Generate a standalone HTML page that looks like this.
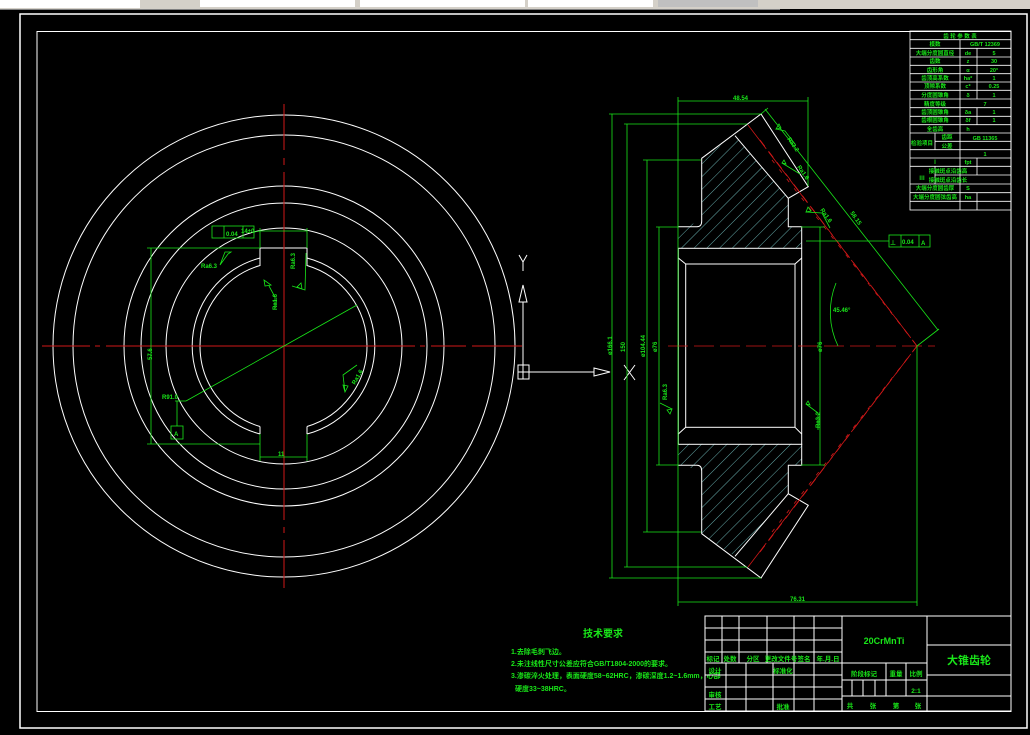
<!DOCTYPE html>
<html><head><meta charset="utf-8"><style>
html,body{margin:0;padding:0;background:#000;width:1030px;height:735px;overflow:hidden}
svg{display:block}
text{font-family:"Liberation Sans","Noto Sans CJK SC",sans-serif;fill:#19e619;font-weight:bold}
</style></head><body>
<svg width="1030" height="735" viewBox="0 0 1030 735" xmlns="http://www.w3.org/2000/svg">
<defs>
<pattern id="h" width="9" height="9" patternUnits="userSpaceOnUse" patternTransform="rotate(45)">
<line x1="0" y1="0" x2="0" y2="9" stroke="#7fd6d6" stroke-width="0.8"/></pattern>
</defs>
<rect width="1030" height="735" fill="#000"/>
<rect x="0" y="0" width="1030" height="9" fill="#d4d0c8"/>
<rect x="0" y="0" width="140" height="8" fill="#fff"/>
<rect x="200" y="0" width="155" height="7" fill="#fff"/>
<rect x="360" y="0" width="165" height="7" fill="#fff"/>
<rect x="528" y="0" width="125" height="7" fill="#fff"/>
<rect x="658" y="0" width="100" height="7" fill="#c0c0c0"/>
<line x1="0" y1="9.5" x2="780" y2="9.5" stroke="#808080"/>
<rect x="20" y="14" width="1007" height="714" fill="none" stroke="#fff" stroke-width="1.5"/>
<rect x="37" y="31.5" width="974" height="680" fill="none" stroke="#fff" stroke-width="1"/>

<g fill="none" stroke="#fff" stroke-width="1">
<circle cx="284" cy="346" r="231"/>
<circle cx="284" cy="346" r="211"/>
<circle cx="284" cy="346" r="160"/>
<circle cx="284" cy="346" r="143"/>
<circle cx="284" cy="346" r="118"/>
<path d="M260,258 A91,91 0 0 0 260,434"/>
<path d="M307,258 A91,91 0 0 1 307,434"/>
<path d="M260,265.5 A84,84 0 0 0 260,426.5"/>
<path d="M307,265.5 A84,84 0 0 1 307,426.5"/>
<path d="M260,266 L260,248 L307,248 L307,266"/>
<path d="M260,426.5 L260,434 M307,426.5 L307,434"/>
</g>
<g stroke="#d01818" stroke-width="1" fill="none">
<line x1="42" y1="346" x2="90" y2="346"/><line x1="95" y1="346" x2="100" y2="346"/><line x1="106" y1="346" x2="415" y2="346"/>
<line x1="420" y1="346" x2="425" y2="346"/><line x1="431" y1="346" x2="466" y2="346"/><line x1="472" y1="346" x2="522" y2="346"/>
<line x1="284" y1="104" x2="284" y2="150"/><line x1="284" y1="158" x2="284" y2="165"/><line x1="284" y1="172" x2="284" y2="520"/>
<line x1="284" y1="527" x2="284" y2="533"/><line x1="284" y1="540" x2="284" y2="588"/>
</g>
<g stroke="#19e619" stroke-width="0.8" fill="none">
<line x1="284" y1="346" x2="357" y2="305"/>
<line x1="284" y1="346" x2="186" y2="401"/>
<line x1="186" y1="401" x2="175" y2="401"/>
<line x1="147" y1="248" x2="260" y2="248"/>
<line x1="147" y1="444" x2="260" y2="444"/>
<line x1="151" y1="248" x2="151" y2="444"/>
<line x1="260" y1="228" x2="260" y2="248"/>
<line x1="307" y1="228" x2="307" y2="248"/>
<line x1="260" y1="231" x2="307" y2="231"/>
<line x1="260" y1="434" x2="260" y2="461"/>
<line x1="307" y1="434" x2="307" y2="461"/>
<line x1="260" y1="457" x2="307" y2="457"/>
<rect x="212" y="226" width="42" height="12"/>
<line x1="224" y1="226" x2="224" y2="238"/><line x1="243" y1="226" x2="243" y2="238"/>
<line x1="254" y1="232" x2="260" y2="231"/>
<rect x="171" y="426" width="12" height="13"/>
<line x1="177" y1="401" x2="177" y2="426"/>
<path d="M220,265 L225,252 L231,252 L228,254 Z"/>
<path d="M264,280 L265,286 L271,285 Z M269,286 L275,297 L275,308"/>
<path d="M301,283 L302,289 L297,287 Z M292,286 L305,290 L306,253"/>
<path d="M345,392 L348,386 L343,385 Z M345,392 L343,375 L357,365"/>
</g>
<g font-size="6">
<text x="241" y="233">14±0</text>
<text x="226" y="236">0.04</text>
<text x="201" y="268">Ra6.3</text>
<text transform="translate(277,310) rotate(-90)">Ra1.6</text>
<text transform="translate(295,269) rotate(-90)">Ra6.3</text>
<text transform="translate(355,385) rotate(-60)">Ra1.6</text>
<text transform="translate(152,360) rotate(-90)">57.6</text>
<text x="162" y="399">R91.0</text>
<text x="278" y="456">11</text>
<text x="174" y="436">A</text>
</g>
<g stroke="#fff" fill="none" stroke-width="1">
<path d="M519,255 L523,262 L527,255 M523,262 L523,271"/>
<path d="M523,285 L519,302 L527,302 Z"/>
<line x1="523" y1="302" x2="523" y2="365"/>
<rect x="518" y="365" width="11" height="14"/>
<line x1="523" y1="365" x2="523" y2="379"/><line x1="518" y1="372" x2="529" y2="372"/>
<line x1="529" y1="372" x2="594" y2="372"/>
<path d="M594,368 L610,372 L594,376 Z"/>
<path d="M624,365 L635,380 M635,365 L624,380"/>
</g>

<path d="M735,135.7 L788.3,198.3 L788.3,226.7 L801.7,226.7 L801.7,248.3 L678.3,248.3 L678.3,226.7 L701.7,221.7 L701.7,158.3 Z" fill="url(#h)"/>
<path d="M735,556.3 L788.3,493.7 L788.3,465.3 L801.7,465.3 L801.7,443.7 L678.3,443.7 L678.3,465.3 L701.7,470.3 L701.7,533.7 Z" fill="url(#h)"/>
<g fill="none" stroke="#fff" stroke-width="1">
<path d="M678.3,226.7 L697,226.7 Q701.7,226.7 701.7,221 L701.7,158.3 L761,114 L808.3,186.7 L788.3,198.3 L788.3,226.7 L801.7,226.7 L801.7,248.3"/>
<path d="M678.3,465.3 L697,465.3 Q701.7,465.3 701.7,471 L701.7,533.7 L761,578 L808.3,505.3 L788.3,493.7 L788.3,465.3 L801.7,465.3 L801.7,443.7"/>
<line x1="735" y1="135.7" x2="788.3" y2="198.3"/>
<line x1="735" y1="556.3" x2="788.3" y2="493.7"/>
<rect x="678.3" y="248.3" width="123.4" height="196"/>
<rect x="685.7" y="264" width="109.3" height="163.3"/>
<path d="M678.3,258 L685.7,264 M801.7,258 L795,264 M678.3,434 L685.7,427.3 M801.7,434 L795,427.3"/>
</g>
<g stroke="#d01818" stroke-width="0.8" fill="none">
<line x1="748" y1="125" x2="917" y2="346" stroke-dasharray="30,4"/>
<line x1="760" y1="140" x2="917" y2="346" stroke-dasharray="8,6"/>
<line x1="772" y1="160" x2="917" y2="346" stroke-dasharray="4,8"/>
<line x1="748" y1="567" x2="917" y2="346" stroke-dasharray="30,4"/>
<line x1="760" y1="552" x2="917" y2="346" stroke-dasharray="8,6"/>
<line x1="772" y1="532" x2="917" y2="346" stroke-dasharray="4,8"/>
<line x1="668" y1="346" x2="935" y2="346" stroke-dasharray="20,6"/>
</g>
<g stroke="#19e619" stroke-width="0.8" fill="none">
<line x1="678" y1="97" x2="678" y2="606"/>
<line x1="808" y1="97" x2="808" y2="186"/>
<line x1="917" y1="346" x2="917" y2="606"/>
<line x1="678" y1="101" x2="808" y2="101"/>
<line x1="678" y1="602" x2="917" y2="602"/>
<line x1="609" y1="114" x2="761" y2="114"/><line x1="609" y1="578" x2="761" y2="578"/>
<line x1="624" y1="124" x2="747" y2="124"/><line x1="624" y1="567" x2="747" y2="567"/>
<line x1="643" y1="160" x2="701" y2="160"/><line x1="643" y1="532" x2="701" y2="532"/>
<line x1="656" y1="227" x2="678" y2="227"/><line x1="656" y1="465" x2="678" y2="465"/>
<line x1="612" y1="114" x2="612" y2="578"/>
<line x1="627" y1="124" x2="627" y2="567"/>
<line x1="647" y1="160" x2="647" y2="532"/>
<line x1="659" y1="227" x2="659" y2="465"/>
<line x1="820" y1="227" x2="820" y2="465"/><line x1="801" y1="227" x2="825" y2="227"/><line x1="801" y1="465" x2="825" y2="465"/>
<line x1="765" y1="109" x2="938" y2="330"/>
<line x1="761" y1="114" x2="768" y2="108"/><line x1="917" y1="346" x2="939" y2="329"/>
<path d="M836,283 A78,78 0 0 0 838,346"/>
<line x1="806" y1="241" x2="889" y2="241"/>
<rect x="889" y="235" width="41" height="12"/>
<line x1="901" y1="235" x2="901" y2="247"/><line x1="919" y1="235" x2="919" y2="247"/>
<path d="M776,129 L781,128 L779,124 Z M776,129 L785,131 L795,144"/>
<path d="M782,163 L786,164 L784,160 Z M782,163 L800,174"/>
<path d="M806,212 L811,211 L808,207 Z M806,212 L822,213 L830,228"/>
<path d="M672,409 L667,410 L670,414 Z M672,409 L660,403"/>
<path d="M806,404 L810,405 L808,401 Z M806,404 L818,413 L818,430"/>
</g>
<g font-size="6">
<text x="733" y="100">48.54</text>
<text x="790" y="601">76.31</text>
<text transform="translate(612,355) rotate(-90)">ø166.1</text>
<text transform="translate(625,352) rotate(-90)">150</text>
<text transform="translate(645,357) rotate(-90)">ø104.44</text>
<text transform="translate(657,352) rotate(-90)">ø76</text>
<text transform="translate(822,352) rotate(-90)">ø76</text>
<text transform="translate(787,139) rotate(55)">Ra3.2</text>
<text transform="translate(797,167) rotate(55)">Ra1.6</text>
<text transform="translate(820,210) rotate(55)">Ra1.6</text>
<text transform="translate(850,213) rotate(55)">58.15</text>
<text x="833" y="312">45.46°</text>
<text transform="translate(667,400) rotate(-90)">Ra6.3</text>
<text transform="translate(820,428) rotate(-90)">Ra3.2</text>
<text x="902" y="244">0.04</text>
<text x="890" y="245">⊥</text>
<text x="921" y="245">A</text>
</g>

<g stroke="#fff" stroke-width="0.8" fill="none">
<rect x="910" y="31" width="101" height="179"/>
<line x1="960" y1="39.7" x2="960" y2="210"/>
<line x1="977" y1="48" x2="977" y2="99"/>
<line x1="977" y1="108" x2="977" y2="125"/>
<line x1="977" y1="158" x2="977" y2="175"/>
<line x1="977" y1="193" x2="977" y2="210"/>
<path d="M910,39.7H1011M910,48.3H1011M910,57H1011M910,65.3H1011M910,73.7H1011M910,82H1011M910,90.3H1011M910,99H1011M910,107.7H1011M910,116.3H1011M910,124.7H1011M910,133H1011M935,141.3H1011M910,149.7H1011M910,158H1011M910,166.3H1011M935,175H1011M910,184H1011M910,192.7H1011M910,201.3H1011"/>
<line x1="935" y1="133" x2="935" y2="149.7"/>
<line x1="935" y1="166.3" x2="935" y2="184"/>
</g>
<g font-size="5.5" text-anchor="middle">
<text x="960" y="38">齿 轮 参 数 表</text>
<text x="935" y="46">模数</text><text x="985" y="46">GB/T 12369</text>
<text x="935" y="55">大端分度圆直径</text><text x="968" y="55">de</text><text x="994" y="55">5</text>
<text x="935" y="63">齿数</text><text x="968" y="63">z</text><text x="994" y="63">30</text>
<text x="935" y="72">齿形角</text><text x="968" y="72">α</text><text x="994" y="72">20°</text>
<text x="935" y="80">齿顶高系数</text><text x="968" y="80">ha*</text><text x="994" y="80">1</text>
<text x="935" y="88">顶隙系数</text><text x="968" y="88">c*</text><text x="994" y="88">0.25</text>
<text x="935" y="97">分度圆锥角</text><text x="968" y="97">δ</text><text x="994" y="97">1</text>
<text x="935" y="106">精度等级</text><text x="985" y="106">7</text>
<text x="935" y="114">齿顶圆锥角</text><text x="968" y="114">δa</text><text x="994" y="114">1</text>
<text x="935" y="122">齿根圆锥角</text><text x="968" y="122">δf</text><text x="994" y="122">1</text>
<text x="935" y="131">全齿高</text><text x="968" y="131">h</text>
<text x="985" y="140">GB 11365</text>
<text x="922" y="145">检验项目</text><text x="947" y="139">齿距</text><text x="947" y="148">公差</text><text x="985" y="156">1</text>
<text x="935" y="164">Ⅰ</text><text x="968" y="164">fpt</text>
<text x="922" y="180">Ⅲ</text><text x="948" y="173">接触斑点沿齿高</text><text x="948" y="182">接触斑点沿齿长</text>
<text x="935" y="190">大端分度圆齿厚</text><text x="968" y="190">S</text>
<text x="935" y="199">大端分度圆弦齿高</text><text x="968" y="199">ha</text>
</g>

<g font-size="7">
<text x="583" y="637" font-size="10">技术要求</text>
<text x="511" y="654">1.去除毛刺飞边。</text>
<text x="511" y="666">2.未注线性尺寸公差应符合GB/T1804-2000的要求。</text>
<text x="511" y="678">3.渗碳淬火处理，表面硬度58~62HRC，渗碳深度1.2~1.6mm，心部</text>
<text x="515" y="691">硬度33~38HRC。</text>
</g>

<g stroke="#fff" stroke-width="1" fill="none">
<rect x="705" y="616" width="306" height="95"/>
<line x1="842" y1="616" x2="842" y2="711"/>
<line x1="927" y1="616" x2="927" y2="711"/>
<path d="M705,628H842M705,640H842M705,652H842M705,663H842M705,675H842M705,687H842M705,699H842"/>
<path d="M722,616V663M739,616V663M767,616V663"/>
<path d="M794,616V711M814,616V711"/>
<path d="M726,663V711M746,663V711M773,663V711"/>
<path d="M842,663H927M842,680H927M842,696H927"/>
<path d="M886,663V696M906,663V696M852,680V696M863,680V696M875,680V696"/>
<path d="M927,645H1011M927,675H1011M927,696H1011"/>
</g>
<g font-size="6.5" text-anchor="middle">
<text x="884" y="644" font-size="9">20CrMnTi</text>
<text x="969" y="664" font-size="11">大锥齿轮</text>
<text x="713" y="661">标记</text><text x="730" y="661">处数</text><text x="753" y="661">分区</text><text x="781" y="661">更改文件号</text><text x="804" y="661">签名</text><text x="828" y="661">年.月.日</text>
<text x="715" y="673">设计</text><text x="783" y="673">标准化</text>
<text x="715" y="697">审核</text>
<text x="715" y="709">工艺</text><text x="783" y="709">批准</text>
<text x="864" y="676">阶段标记</text><text x="896" y="676">重量</text><text x="916" y="676">比例</text>
<text x="916" y="693">2:1</text>
<text x="850" y="708">共</text><text x="873" y="708">张</text><text x="896" y="708">第</text><text x="918" y="708">张</text>
</g>
</svg>
</body></html>
